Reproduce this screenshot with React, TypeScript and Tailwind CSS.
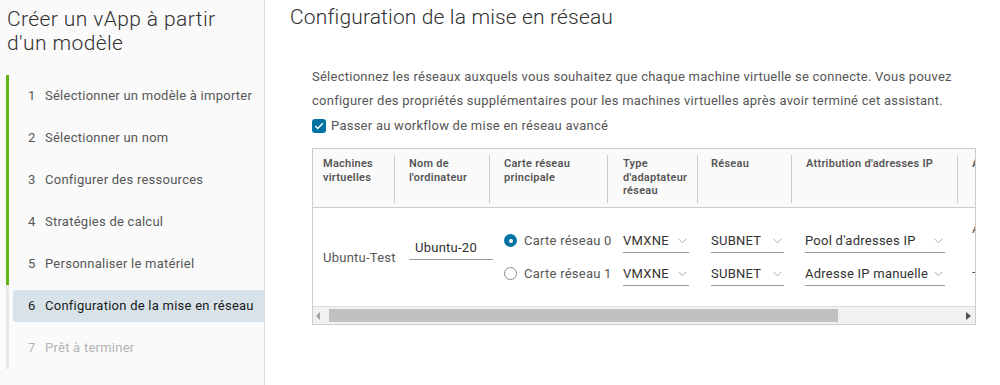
import React from "react";

const STEPS = [
  "Sélectionner un modèle à importer",
  "Sélectionner un nom",
  "Configurer des ressources",
  "Stratégies de calcul",
  "Personnaliser le matériel",
  "Configuration de la mise en réseau",
  "Prêt à terminer",
];

function Chevron() {
  return (
    <svg width="9" height="6" viewBox="0 0 9 6" className="shrink-0">
      <path d="M0.5 0.8 L4.5 4.8 L8.5 0.8" fill="none" stroke="#a8a8a8" strokeWidth="1" />
    </svg>
  );
}

function Select({ value, w }: { value: string; w: string }) {
  return (
    <div className={`flex items-center justify-between h-[24px] border-b border-[#9a9a9a] text-[13px] text-[#313131] pr-[2px] ${w}`}>
      <span className="whitespace-nowrap overflow-hidden">{value}</span>
      <Chevron />
    </div>
  );
}

function Radio({ checked, label }: { checked?: boolean; label: string }) {
  return (
    <div className="flex items-center h-[33px] gap-[7px]">
      {checked ? (
        <span className="shrink-0 w-[13px] h-[13px] rounded-full bg-[#0072a3] flex items-center justify-center">
          <span className="w-[4px] h-[4px] rounded-full bg-white" />
        </span>
      ) : (
        <span className="shrink-0 w-[13px] h-[13px] rounded-full border border-[#8c8c8c] bg-white" />
      )}
      <span className="text-[13px] text-[#565656] whitespace-nowrap">{label}</span>
    </div>
  );
}

const COLS = [
  { w: "w-[82px]", pl: "pl-[10px]", h: ["Machines", "virtuelles"] },
  { w: "w-[95px]", pl: "pl-[14px]", h: ["Nom de", "l'ordinateur"] },
  { w: "w-[118px]", pl: "pl-[14px]", h: ["Carte réseau", "principale"] },
  { w: "w-[90px]", pl: "pl-[15px]", h: ["Type", "d'adaptateur", "réseau"] },
  { w: "w-[94px]", pl: "pl-[13px]", h: ["Réseau"] },
  { w: "w-[166px]", pl: "pl-[14px]", h: ["Attribution d'adresses IP"] },
  { w: "w-[140px]", pl: "pl-[14px]", h: ["Adresse IP"] },
];

export default function App() {
  return (
    <div className="w-[1000px] h-[385px] flex bg-white font-[Roboto,sans-serif] tracking-[0.25px] overflow-hidden">
      {/* wizard nav */}
      <div className="w-[265px] shrink-0 bg-[#fafafa] border-r border-[#dddddd]">
        <div className="pl-[7px] pt-[7px] text-[21px] leading-[24px] font-light tracking-[0.4px] text-[#313131]">
          Créer un vApp à partir
          <br />
          d'un modèle
        </div>
        <div className="mt-[20px] ml-[6px]">
          {STEPS.map((s, i) => {
            const done = i < 5;
            const active = i === 5;
            return (
              <div
                key={s}
                className={`h-[42px] border-l-[3px] pl-[4px] flex items-center ${done ? "border-[#60b515]" : "border-[#e8e8e8]"}`}
              >
                <div
                  className={`w-full h-[32px] flex items-center pl-[15px] rounded-l-[3px] text-[13px] ${
                    active ? "bg-[#d8e3e9] text-[#1a1a1a]" : i === 6 ? "text-[#b3b3b3]" : "text-[#565656]"
                  }`}
                >
                  <span className="w-[17px]">{i + 1}</span>
                  <span className="whitespace-nowrap">{s}</span>
                </div>
              </div>
            );
          })}
        </div>
      </div>

      {/* main */}
      <div className="flex-1 min-w-0">
        <div className="pl-[25px] pt-[4px] text-[21px] leading-[26px] font-light tracking-[0.15px] text-[#313131]">
          Configuration de la mise en réseau
        </div>
        <div className="pl-[47px] pr-[24px]">
          <p className="mt-[35px] text-[13px] leading-[24px] text-[#565656]">
            Sélectionnez les réseaux auxquels vous souhaitez que chaque machine virtuelle se connecte. Vous pouvez
            configurer des propriétés supplémentaires pour les machines virtuelles après avoir terminé cet assistant.
          </p>
          <label className="flex items-center gap-[5px] h-[18px] mt-[4px] text-[13px] text-[#565656]">
            <span className="w-[14px] h-[14px] rounded-[3px] bg-[#0072a3] flex items-center justify-center">
              <svg width="10" height="8" viewBox="0 0 10 8">
                <path d="M1.2 4 L3.8 6.4 L8.8 1.3" fill="none" stroke="white" strokeWidth="1.4" />
              </svg>
            </span>
            Passer au workflow de mise en réseau avancé
          </label>

          {/* datagrid */}
          <div className="mt-[13px] border border-[#cccccc] overflow-hidden">
            <div className="flex bg-[#fafafa] border-b border-[#cccccc] h-[59px]">
              {COLS.map((c, i) => (
                <div key={i} className={`${c.w} shrink-0 flex`}>
                  <div className={`flex-1 ${c.pl} pt-[8px] text-[11px] leading-[13.5px] font-semibold text-[#565656] whitespace-nowrap`}>
                    {c.h.map((l) => (
                      <div key={l}>{l}</div>
                    ))}
                  </div>
                  {i < 6 && <div className="w-px bg-[#cccccc] mt-[6px] mb-[4px]" />}
                </div>
              ))}
            </div>

            <div className="flex h-[98px] text-[13px] text-[#565656]">
              <div className="w-[82px] shrink-0 pl-[10px] pt-[40px] whitespace-nowrap">Ubuntu-Test</div>
              <div className="w-[95px] shrink-0 pl-[14px] pt-[28px]">
                <div className="w-[84px] h-[24px] border-b border-[#9a9a9a] pl-[6px] text-[#313131] flex items-center">Ubuntu-20</div>
              </div>
              <div className="w-[118px] shrink-0 pl-[14px] pt-[16px]">
                <Radio checked label="Carte réseau 0" />
                <Radio label="Carte réseau 1" />
              </div>
              <div className="w-[90px] shrink-0 pl-[15px] pt-[21px] flex flex-col gap-[9px]">
                <Select value="VMXNE" w="w-[66px]" />
                <Select value="VMXNE" w="w-[66px]" />
              </div>
              <div className="w-[94px] shrink-0 pl-[13px] pt-[21px] flex flex-col gap-[9px]">
                <Select value="SUBNET" w="w-[73px]" />
                <Select value="SUBNET" w="w-[73px]" />
              </div>
              <div className="w-[166px] shrink-0 pl-[13px] pt-[21px] flex flex-col gap-[9px]">
                <Select value="Pool d'adresses IP" w="w-[140px]" />
                <Select value="Adresse IP manuelle" w="w-[140px]" />
              </div>
              <div className="w-[140px] shrink-0 pl-[14px] pt-[11px] flex flex-col">
                <span className="whitespace-nowrap">Automatique</span>
                <span className="mt-[23px]">-</span>
              </div>
            </div>

            {/* scrollbar */}
            <div className="flex items-center h-[18px] bg-[#f1f1f1] border-t border-[#dddddd] px-[3px]">
              <svg width="5" height="8" viewBox="0 0 5 8" className="shrink-0">
                <path d="M4 0 L0 4 L4 8 Z" fill="#a3a3a3" />
              </svg>
              <div className="ml-[8px] w-[509px] h-[13px] bg-[#c1c1c1]" />
              <div className="flex-1" />
              <svg width="5" height="8" viewBox="0 0 5 8" className="shrink-0 mr-[1px]">
                <path d="M0 0 L5 4 L0 8 Z" fill="#505050" />
              </svg>
            </div>
          </div>
        </div>
      </div>
    </div>
  );
}
